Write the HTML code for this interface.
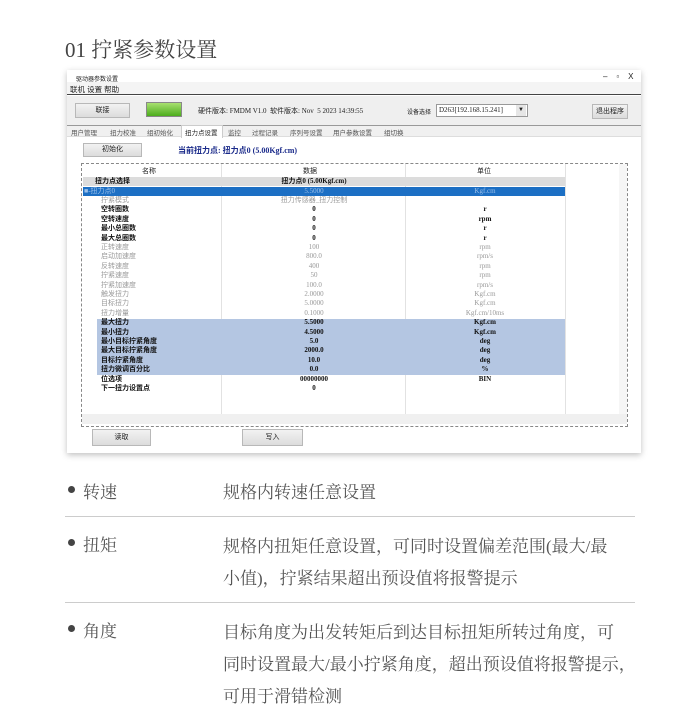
<!DOCTYPE html>
<html><head><meta charset="utf-8">
<style>
*{margin:0;padding:0;box-sizing:border-box}
body{width:700px;height:694px;background:#fff;position:relative;overflow:hidden;font-family:"Liberation Serif","Noto Serif CJK SC",serif}
.a{position:absolute;white-space:nowrap}
.ui{font-family:"Liberation Sans","Noto Sans CJK SC",sans-serif;font-size:7px;color:#222}
.btn{position:absolute;background:linear-gradient(#f2f2f2,#dcdcdc);border:1px solid #b8b8b8;text-align:center;font-family:"Liberation Sans","Noto Sans CJK SC",sans-serif;font-size:7px;color:#222}
.row{position:absolute;left:83px;width:482px;height:9.4px;font-size:7px;line-height:9.4px;font-family:"Liberation Serif","Noto Sans CJK SC",serif}
.row span{position:absolute;top:0}
.c1{left:18px}.c2{left:140px;width:182px;text-align:center}.c3{left:322px;width:160px;text-align:center}
.g{color:#999}.b{color:#111;font-weight:bold}
.txt{font-size:17px;color:#555}
</style></head><body>
<div class="a" style="left:65px;top:34px;font-size:21px;color:#444">01 拧紧参数设置</div>

<!-- window -->
<div class="a" style="left:67px;top:70px;width:574px;height:383px;background:#fff;box-shadow:0 2px 6px rgba(0,0,0,.25)"></div>
<div class="a ui" style="left:76px;top:74px;font-size:6px">驱动器参数设置</div>
<div class="a ui" style="left:603px;top:72px;font-size:8px">–&nbsp;&nbsp;&nbsp;&nbsp;▫&nbsp;&nbsp;&nbsp;&nbsp;X</div>
<div class="a" style="left:67px;top:82px;width:574px;height:13px;background:#f4f4f4;border-bottom:1px solid #444"></div>
<div class="a ui" style="left:70px;top:84px;font-size:7.5px">联机 设置 帮助</div>
<div class="a" style="left:67px;top:96px;width:574px;height:30px;background:#efefef;border-bottom:1px solid #999"></div>
<div class="btn" style="left:75px;top:103px;width:55px;height:15px;line-height:13px">联接</div>
<div class="a" style="left:146px;top:102px;width:36px;height:15px;background:linear-gradient(#a8e070,#4cad1c);border:1px solid #888"></div>
<div class="a ui" style="left:198px;top:106px;font-family:'Liberation Serif','Noto Sans CJK SC',serif;font-size:7px">硬件版本: FMDM V1.0 &nbsp;软件版本: Nov &nbsp;5 2023 14:39:55</div>
<div class="a ui" style="left:407px;top:107px;font-size:6px">设备选择</div>
<div class="a ui" style="left:436px;top:104px;width:92px;height:13px;border:1px solid #999;background:#fff;font-family:'Liberation Serif',serif;font-size:7px;line-height:11px;padding-left:2px">D263[192.168.15.241] <span style="position:absolute;right:1px;top:0;width:10px;height:11px;background:#e6e6e6;text-align:center;font-size:6px">▼</span></div>
<div class="btn" style="left:592px;top:104px;width:36px;height:15px;line-height:13px">退出程序</div>
<!-- tabs -->
<div class="a" style="left:67px;top:126px;width:574px;height:11px;background:#f0f0f0;border-bottom:1px solid #ddd"></div>
<div class="a ui" style="left:71px;top:127px;font-size:6.5px;color:#555;word-spacing:0">用户管理</div>
<div class="a ui" style="left:110px;top:127px;font-size:6.5px;color:#555">扭力校准</div>
<div class="a ui" style="left:147px;top:127px;font-size:6.5px;color:#555">组初始化</div>
<div class="a" style="left:181px;top:125px;width:42px;height:13px;background:#fff;border:1px solid #ccc;border-bottom:none"></div>
<div class="a ui" style="left:185px;top:127px;font-size:6.5px">扭力点设置</div>
<div class="a ui" style="left:228px;top:127px;font-size:6.5px;color:#555">监控</div>
<div class="a ui" style="left:252px;top:127px;font-size:6.5px;color:#555">过程记录</div>
<div class="a ui" style="left:290px;top:127px;font-size:6.5px;color:#555">序列号设置</div>
<div class="a ui" style="left:333px;top:127px;font-size:6.5px;color:#555">用户参数设置</div>
<div class="a ui" style="left:384px;top:127px;font-size:6.5px;color:#555">组切换</div>

<div class="btn" style="left:83px;top:143px;width:59px;height:14px;line-height:12px">初始化</div>
<div class="a" style="left:178px;top:145px;font-size:8px;font-weight:bold;color:#1a2a8a;font-family:'Liberation Serif','Noto Sans CJK SC',serif">当前扭力点: 扭力点0 (5.00Kgf.cm)</div>

<!-- table -->
<div class="a" style="left:81px;top:163px;width:547px;height:264px;border:1px dashed #888;background:#fff"></div>
<div class="a" style="left:221px;top:164px;width:1px;height:250px;background:#e2e2e2"></div>
<div class="a" style="left:405px;top:164px;width:1px;height:250px;background:#e2e2e2"></div>
<div class="a" style="left:565px;top:164px;width:1px;height:250px;background:#e2e2e2"></div>
<div class="a" style="left:619px;top:164px;width:8px;height:250px;background:#f6f6f6"></div>
<div class="a" style="left:82px;top:414px;width:545px;height:10px;background:#f0f0f0"></div>
<div class="a ui" style="left:142px;top:166px">名称</div>
<div class="a ui" style="left:303px;top:166px">数据</div>
<div class="a ui" style="left:477px;top:166px">单位</div>
<div class="a" style="left:83px;top:177px;width:482px;height:9.4px;background:#dcdcdc"></div>
<div class="a" style="left:83px;top:186.5px;width:482px;height:9.4px;background:#1c6fc4"></div>
<div class="a" style="left:97px;top:318.5px;width:468px;height:56.4px;background:#b4c6e2"></div>
<div class="row" style="top:177px"><span class="c1 b" style="left:12px">扭力点选择</span><span class="c2 b">扭力点0 (5.00Kgf.cm)</span></div>
<div class="row" style="top:186.5px;color:#9cc0ea"><span style="left:1px">■-扭力点0</span><span class="c2">5.5000</span><span class="c3">Kgf.cm</span></div>
<div class="row" style="top:196px"><span class="c1 g">拧紧模式</span><span class="c2 g">扭力传感器_扭力控制</span></div>
<div class="row" style="top:205.4px"><span class="c1 b">空转圈数</span><span class="c2 b">0</span><span class="c3 b">r</span></div>
<div class="row" style="top:214.8px"><span class="c1 b">空转速度</span><span class="c2 b">0</span><span class="c3 b">rpm</span></div>
<div class="row" style="top:224.2px"><span class="c1 b">最小总圈数</span><span class="c2 b">0</span><span class="c3 b">r</span></div>
<div class="row" style="top:233.6px"><span class="c1 b">最大总圈数</span><span class="c2 b">0</span><span class="c3 b">r</span></div>
<div class="row" style="top:243px"><span class="c1 g">正转速度</span><span class="c2 g">100</span><span class="c3 g">rpm</span></div>
<div class="row" style="top:252.4px"><span class="c1 g">启动加速度</span><span class="c2 g">800.0</span><span class="c3 g">rpm/s</span></div>
<div class="row" style="top:261.8px"><span class="c1 g">反转速度</span><span class="c2 g">400</span><span class="c3 g">rpm</span></div>
<div class="row" style="top:271.2px"><span class="c1 g">拧紧速度</span><span class="c2 g">50</span><span class="c3 g">rpm</span></div>
<div class="row" style="top:280.6px"><span class="c1 g">拧紧加速度</span><span class="c2 g">100.0</span><span class="c3 g">rpm/s</span></div>
<div class="row" style="top:290px"><span class="c1 g">触发扭力</span><span class="c2 g">2.0000</span><span class="c3 g">Kgf.cm</span></div>
<div class="row" style="top:299.4px"><span class="c1 g">目标扭力</span><span class="c2 g">5.0000</span><span class="c3 g">Kgf.cm</span></div>
<div class="row" style="top:308.8px"><span class="c1 g">扭力增量</span><span class="c2 g">0.1000</span><span class="c3 g">Kgf.cm/10ms</span></div>
<div class="row" style="top:318.2px"><span class="c1 b">最大扭力</span><span class="c2 b">5.5000</span><span class="c3 b">Kgf.cm</span></div>
<div class="row" style="top:327.6px"><span class="c1 b">最小扭力</span><span class="c2 b">4.5000</span><span class="c3 b">Kgf.cm</span></div>
<div class="row" style="top:337px"><span class="c1 b">最小目标拧紧角度</span><span class="c2 b">5.0</span><span class="c3 b">deg</span></div>
<div class="row" style="top:346.4px"><span class="c1 b">最大目标拧紧角度</span><span class="c2 b">2000.0</span><span class="c3 b">deg</span></div>
<div class="row" style="top:355.8px"><span class="c1 b">目标拧紧角度</span><span class="c2 b">10.0</span><span class="c3 b">deg</span></div>
<div class="row" style="top:365.2px"><span class="c1 b">扭力微调百分比</span><span class="c2 b">0.0</span><span class="c3 b">%</span></div>
<div class="row" style="top:374.6px"><span class="c1 b">位选项</span><span class="c2 b">00000000</span><span class="c3 b">BIN</span></div>
<div class="row" style="top:384px"><span class="c1 b">下一扭力设置点</span><span class="c2 b">0</span></div>

<div class="btn" style="left:92px;top:429px;width:59px;height:17px;line-height:15px">读取</div>
<div class="btn" style="left:242px;top:429px;width:61px;height:17px;line-height:15px">写入</div>

<!-- specs -->
<div class="a" style="left:68px;top:486px;width:7px;height:7px;border-radius:50%;background:#444"></div>
<div class="a txt" style="left:83px;top:478px">转速</div>
<div class="a txt" style="left:223px;top:478px">规格内转速任意设置</div>
<div class="a" style="left:65px;top:516px;width:570px;height:1px;background:#ccc"></div>
<div class="a" style="left:68px;top:539px;width:7px;height:7px;border-radius:50%;background:#444"></div>
<div class="a txt" style="left:83px;top:531px">扭矩</div>
<div class="a txt" style="left:223px;top:531px;line-height:32px">规格内扭矩任意设置，可同时设置偏差范围(最大/最<br>小值)，拧紧结果超出预设值将报警提示</div>
<div class="a" style="left:65px;top:602px;width:570px;height:1px;background:#ccc"></div>
<div class="a" style="left:68px;top:625px;width:7px;height:7px;border-radius:50%;background:#444"></div>
<div class="a txt" style="left:83px;top:617px">角度</div>
<div class="a txt" style="left:223px;top:617px;line-height:32px">目标角度为出发转矩后到达目标扭矩所转过角度，可<br>同时设置最大/最小拧紧角度，超出预设值将报警提示，<br>可用于滑错检测</div>
</body></html>
